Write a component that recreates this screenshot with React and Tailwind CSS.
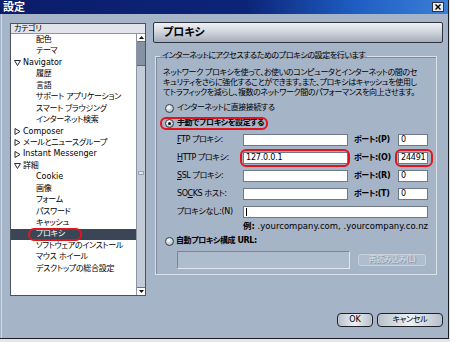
import React from 'react'

const TREE = [
  { t: '配色', lv: 1 },
  { t: 'テーマ', lv: 1 },
  { t: 'Navigator', lv: 0, open: true },
  { t: '履歴', lv: 1 },
  { t: '言語', lv: 1 },
  { t: 'サポート アプリケーション', lv: 1 },
  { t: 'スマート ブラウジング', lv: 1 },
  { t: 'インターネット検索', lv: 1 },
  { t: 'Composer', lv: 0 },
  { t: 'メールとニュースグループ', lv: 0 },
  { t: 'Instant Messenger', lv: 0 },
  { t: '詳細', lv: 0, open: true },
  { t: 'Cookie', lv: 1 },
  { t: '画像', lv: 1 },
  { t: 'フォーム', lv: 1 },
  { t: 'パスワード', lv: 1 },
  { t: 'キャッシュ', lv: 1 },
  { t: 'プロキシ', lv: 1, sel: true },
  { t: 'ソフトウェアのインストール', lv: 1 },
  { t: 'マウス ホイール', lv: 1 },
  { t: 'デスクトップの総合設定', lv: 1 },
]

const PROXIES = [
  { key: 'F', rest: 'TP プロキシ:', host: '', port: '0', pk: 'P' },
  { key: 'H', rest: 'TTP プロキシ:', host: '127.0.0.1', port: '24491', pk: 'O', mark: true },
  { key: 'S', rest: 'SL プロキシ:', host: '', port: '0', pk: 'R' },
  { key: 'C', rest: 'KS ホスト:', pre: 'SO', host: '', port: '0', pk: 'T' },
]

const isLatin = s => /^[\x00-\x7f]*$/.test(s)

function Twisty({ open }) {
  return open ? (
    <svg width="7" height="6" viewBox="0 0 7 6" className="shrink-0">
      <path d="M0.5 0.5h6L3.5 5.5z" fill="none" stroke="#262b33" />
    </svg>
  ) : (
    <svg width="7" height="7" viewBox="0 0 7 7" className="shrink-0">
      <path d="M1 0.5v6l5-3z" fill="#fff" stroke="#262b33" />
    </svg>
  )
}

function Radio({ checked }) {
  return (
    <span className="w-[9px] h-[9px] shrink-0 rounded-full border border-[#39414d] bg-[radial-gradient(circle_at_35%_30%,#ffffff,#c3cad4_60%,#87919f)] flex items-center justify-center">
      {checked && <span className="w-[3px] h-[3px] rounded-full bg-[#111]" />}
    </span>
  )
}

function Field({ children, className = '' }) {
  return (
    <div className={`h-[12px] bg-white border border-[#6f7886] flex items-center pl-[2px] text-[8px] leading-none tracking-[-0.2px] overflow-visible whitespace-nowrap ${className}`}>
      {children}
    </div>
  )
}

function Ring({ className }) {
  return <span className={`absolute rounded-[6px] border-2 border-[#e4141c] pointer-events-none ${className}`} />
}

export default function App() {
  return (
    <div className="w-[450px] h-[342px] bg-[#e3e6ea] overflow-hidden [font-family:'DejaVu_Sans','Noto_Sans_CJK_JP',sans-serif] [font-feature-settings:'palt'] text-black">
      <div className="w-[449px] h-[339px] flex flex-col border-r border-b border-[#1b1d21] bg-[#a5b4c7]">

        <div className="h-[14px] shrink-0 flex items-center justify-between pl-[3px] pr-[4px] bg-[linear-gradient(90deg,#0a1d6a_0%,#0c2478_55%,#1f5fc4_80%,#3b7fd6_100%)]">
          <span className="text-white font-bold text-[11px] leading-none">設定</span>
          <span className="w-[12px] h-[10px] bg-[#e9ecf0] border border-[#30343a] flex items-center justify-center">
            <svg width="6" height="6" viewBox="0 0 6 6"><path d="M0.5 0.5l5 5M5.5 0.5l-5 5" stroke="#000" strokeWidth="1.4" /></svg>
          </span>
        </div>

        <div className="flex-1 flex pt-[8px] border-l border-[#cdd6e1] ml-[1px]">

          <div className="ml-[8px] mt-[1px] w-[136px] h-[273px] border border-[#4a525e] bg-white flex flex-col">
            <div className="h-[10px] shrink-0 bg-[#e1e5eb] border-b border-[#8e96a2] pl-[3px] text-[8px] leading-[10px] tracking-[-0.3px]">カテゴリ</div>
            <div className="flex-1 flex min-h-0">
              <div className="flex-1 pt-[0.3px] text-[8px]">
                {TREE.map(it => (
                  <div key={it.t} className={`relative h-[11.45px] flex items-center whitespace-nowrap leading-none ${isLatin(it.t) ? '' : 'tracking-[-0.3px]'} ${it.lv === 0 ? 'pl-[3px] gap-[2px]' : 'pl-[25px]'} ${it.sel ? 'bg-[#3a4556] text-white' : ''}`}>
                    {it.lv === 0 && <Twisty open={it.open} />}
                    <span>{it.t}</span>
                    {it.sel && <Ring className="left-[17px] w-[54px] -top-[1px] -bottom-[1px]" />}
                  </div>
                ))}
              </div>
              <div className="w-[9px] shrink-0 flex flex-col bg-[#c3cbd6] border-l border-[#8b95a3]">
                <div className="h-[8px] bg-white border-b border-[#6d7684] flex items-center justify-center">
                  <svg width="5" height="3" viewBox="0 0 5 3"><path d="M0 3h5L2.5 0z" fill="#111" /></svg>
                </div>
                <div className="h-[24px] bg-[#8692a1] border-b border-[#5c6573]" />
                <div className="flex-1 flex flex-col">
                  <div className="h-[105px]" />
                  <div className="h-[4px] mx-[1px] bg-[#dfe4ea] border border-[#9aa3b0]" />
                </div>
                <div className="h-[8px] bg-white border-t border-[#6d7684] flex items-center justify-center">
                  <svg width="5" height="3" viewBox="0 0 5 3"><path d="M0 0h5L2.5 3z" fill="#111" /></svg>
                </div>
              </div>
            </div>
          </div>

          <div className="ml-[7px] w-[290px] flex flex-col">
            <div className="h-[21px] shrink-0 rounded-[2px] border border-[#2e3440] bg-[linear-gradient(180deg,#eef0f3_0%,#d2d7de_45%,#a2acba_100%)] flex items-center pl-[9px]">
              <span className="font-bold text-[11px] leading-none">プロキシ</span>
            </div>

            <fieldset className="mt-[8px] ml-[2px] w-[282px] border border-[#dbe1e9] shadow-[inset_1px_1px_0_#7f8a99] pb-[5px] text-[8px] tracking-[-0.4px]">
              <legend className="ml-[4px] px-[2px] leading-[10px] whitespace-nowrap">インターネットにアクセスするためのプロキシの設定を行います</legend>

              <div className="pl-[7px] pt-[7px] leading-[10px] whitespace-nowrap">
                <div>ネットワーク プロキシを使って、お使いのコンピュータとインターネットの間のセ</div>
                <div>キュリティをさらに強化することができます。また、プロキシはキャッシュを使用し</div>
                <div>てトラフィックを減らし、複数のネットワーク間のパフォーマンスを向上させます。</div>
              </div>

              <div className="mt-[4px] h-[12px] pl-[9px] flex items-center gap-[3px] leading-none">
                <Radio />
                <span>インターネットに直接接続する</span>
              </div>
              <div className="mt-[3px] h-[12px] pl-[9px] flex items-center leading-none font-bold">
                <span className="relative flex items-center gap-[3px]">
                  <Radio checked />
                  <span>手動でプロキシを設定する</span>
                  <Ring className="-left-[5px] -right-[4px] -top-[2px] -bottom-[2px]" />
                </span>
              </div>

              <div className="mt-[2px] ml-[21px] grid grid-cols-[66px_105px_50px_30px] auto-rows-[18px] items-center leading-none">
                {PROXIES.map(p => (
                  <React.Fragment key={p.pk}>
                    <span className="whitespace-nowrap">
                      {p.pre ? <>{p.pre}<span className="underline">{p.key}</span></> : <span className="underline">{p.key}</span>}{p.rest}
                    </span>
                    <div className="relative">
                      <Field>{p.host}</Field>
                      {p.mark && <Ring className="-left-[3px] -right-[2px] -top-[3px] -bottom-[3px]" />}
                    </div>
                    <span className="pl-[6px] font-bold whitespace-nowrap">ポート:({p.pk})</span>
                    <div className="relative">
                      <Field className="pl-[1px]">{p.port}</Field>
                      {p.mark && <Ring className="-left-[3px] -right-[5px] -top-[3px] -bottom-[3px]" />}
                    </div>
                  </React.Fragment>
                ))}
                <span className="whitespace-nowrap">プロキシなし:(N)</span>
                <div className="col-span-3">
                  <Field><span className="w-px h-[8px] bg-black" /></Field>
                </div>
              </div>

              <div className="h-[10px] pl-[87px] leading-[10px] whitespace-nowrap tracking-normal text-[8.5px]">
                <span className="font-bold">例:</span> .yourcompany.com, .yourcompany.co.nz
              </div>

              <div className="mt-[4px] h-[12px] pl-[9px] flex items-center gap-[2px] leading-none font-bold">
                <Radio />
                <span>自動プロキシ構成 URL:</span>
              </div>

              <div className="mt-[4px] h-[18px] pl-[21px] flex items-center">
                <div className="w-[173px] h-[18px] border border-t-[#7b8594] border-l-[#7b8594] border-b-[#e2e7ee] border-r-[#e2e7ee] bg-[#aebcce]" />
                <div className="ml-[8px] w-[68px] h-[12px] rounded-[3px] border border-[#c9d0da] bg-[#b0bdce] flex items-center justify-center leading-none text-[#d8dee6] [text-shadow:1px_1px_0_#8794a4]">
                  再読み込み(L)
                </div>
              </div>
            </fieldset>

            <div className="mt-[38px] flex justify-end gap-[4px] text-[8px] leading-none">
              <div className="w-[36px] h-[14px] rounded-[4px] border-[1.5px] border-[#1d2127] bg-[linear-gradient(90deg,#b7c0cb,#eef1f4_50%,#b7c0cb)] flex items-center justify-center">OK</div>
              <div className="w-[66px] h-[14px] rounded-[4px] border-[1.5px] border-[#1d2127] bg-[linear-gradient(90deg,#b7c0cb,#eef1f4_50%,#b7c0cb)] flex items-center justify-center tracking-[-0.3px]">キャンセル</div>
            </div>
          </div>
        </div>
      </div>
    </div>
  )
}
